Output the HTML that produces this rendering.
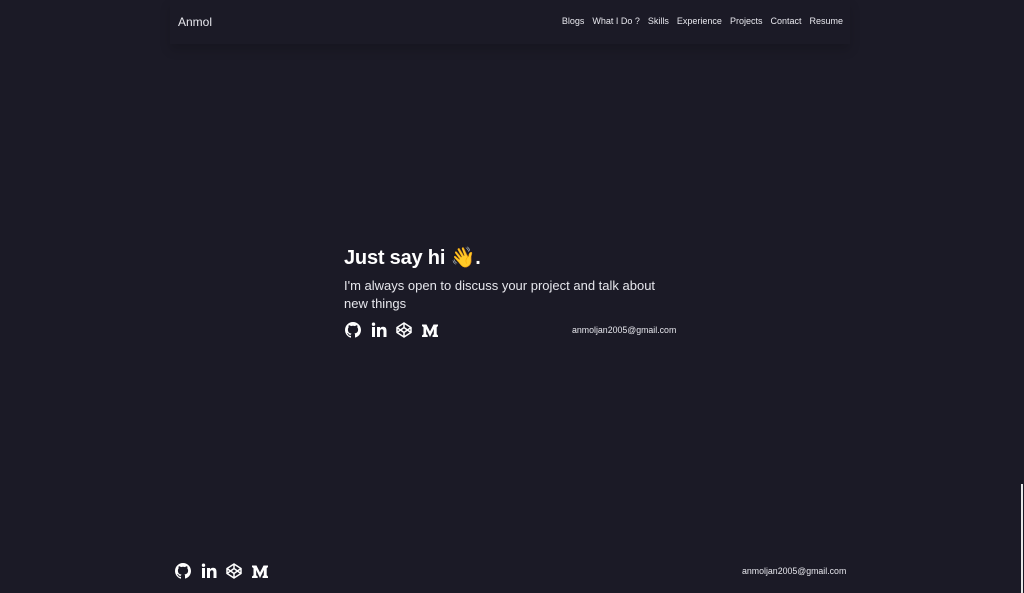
<!DOCTYPE html>
<html><head><meta charset="utf-8"><style>
*{margin:0;padding:0;box-sizing:border-box}
body{width:1024px;height:593px;background:#1b1a26;color:#fff;font-family:"Liberation Sans",sans-serif;position:relative;overflow:hidden}
.nav{position:absolute;top:0;left:170px;width:680px;height:44px;box-shadow:0 6px 10px rgba(0,0,0,.15)}
.logo{position:absolute;left:8px;top:15px;font-size:12px;color:#e8e8ee}
.links{position:absolute;right:7px;top:16px;font-size:9px;color:#e8e8ee;display:flex;gap:8px}
h1{position:absolute;left:344px;top:245px;font-size:20px;font-weight:bold;letter-spacing:-.2px}
p.sub{position:absolute;left:344px;top:277px;width:330px;font-size:13px;line-height:18px;color:#e6e6ec}
.icons{position:absolute;display:flex;gap:9.5px}
.icons svg{width:16px;height:16px;fill:#fff}
.mail{position:absolute;font-size:8.8px;color:#e6e6ec}
.sb{position:absolute;right:1px;top:484px;width:2px;height:109px;background:#e8e8e8}
</style></head><body>
<div class="nav"><div class="logo">Anmol</div>
<div class="links"><span>Blogs</span><span>What I Do ?</span><span>Skills</span><span>Experience</span><span>Projects</span><span>Contact</span><span>Resume</span></div></div>
<h1>Just say hi <span style="font-family:'Noto Color Emoji',sans-serif">👋</span>.</h1>
<p class="sub">I'm always open to discuss your project and talk about new things</p>
<div class="icons" style="left:345px;top:322px">
<svg viewBox="0 0 16 16"><path d="M8 0C3.6 0 0 3.6 0 8c0 3.5 2.3 6.5 5.5 7.6.4.1.5-.2.5-.4v-1.4c-2.2.5-2.7-1-2.7-1-.4-.9-.9-1.2-.9-1.2-.7-.5.1-.5.1-.5.8.1 1.2.8 1.2.8.7 1.3 1.9.9 2.3.7.1-.5.3-.9.5-1.1-1.8-.2-3.6-.9-3.6-4 0-.9.3-1.6.8-2.1-.1-.2-.4-1 .1-2.1 0 0 .7-.2 2.2.8.6-.2 1.3-.3 2-.3s1.4.1 2 .3c1.5-1 2.2-.8 2.2-.8.4 1.1.2 1.9.1 2.1.5.6.8 1.3.8 2.1 0 3.1-1.9 3.7-3.6 3.9.3.3.5.8.5 1.5v2.2c0 .2.1.5.6.4C13.7 14.5 16 11.5 16 8c0-4.4-3.6-8-8-8z"/></svg>
<svg viewBox="0 0 16 16"><path d="M1 5h3v10H1zM2.5 0.5a1.7 1.7 0 110 3.4 1.7 1.7 0 010-3.4zM6 5h3v1.4C9.5 5.5 10.6 4.8 12 4.8c3 0 3.5 2 3.5 4.5V15h-3V9.9c0-1.2 0-2.7-1.6-2.7S9 8.5 9 9.8V15H6z"/></svg>
<svg viewBox="0 0 16 16" fill="none" stroke="#fff" stroke-width="1.5" style="fill:none"><path d="M8 1l7 4.5v5L8 15l-7-4.5v-5zM8 1v4.5M8 10.5V15M1 5.5l7 5 7-5M1 10.5l7-5 7 5"/></svg>
<svg viewBox="0 0 16 16"><path d="M0 2.5h4.5L8 9.5l3.5-7H16v1.5l-1.3 1.2v7l1.3 1.3V15h-5.5v-1.5l1.3-1.3V7L8 15 4.2 7v5.2l1.5 1.3V15H0v-1.5l1.5-1.3V5.2L0 4z"/></svg>
</div>
<div class="mail" style="left:572px;top:325px">anmoljan2005@gmail.com</div>
<div class="icons" style="left:175px;top:563px">
<svg viewBox="0 0 16 16"><path d="M8 0C3.6 0 0 3.6 0 8c0 3.5 2.3 6.5 5.5 7.6.4.1.5-.2.5-.4v-1.4c-2.2.5-2.7-1-2.7-1-.4-.9-.9-1.2-.9-1.2-.7-.5.1-.5.1-.5.8.1 1.2.8 1.2.8.7 1.3 1.9.9 2.3.7.1-.5.3-.9.5-1.1-1.8-.2-3.6-.9-3.6-4 0-.9.3-1.6.8-2.1-.1-.2-.4-1 .1-2.1 0 0 .7-.2 2.2.8.6-.2 1.3-.3 2-.3s1.4.1 2 .3c1.5-1 2.2-.8 2.2-.8.4 1.1.2 1.9.1 2.1.5.6.8 1.3.8 2.1 0 3.1-1.9 3.7-3.6 3.9.3.3.5.8.5 1.5v2.2c0 .2.1.5.6.4C13.7 14.5 16 11.5 16 8c0-4.4-3.6-8-8-8z"/></svg>
<svg viewBox="0 0 16 16"><path d="M1 5h3v10H1zM2.5 0.5a1.7 1.7 0 110 3.4 1.7 1.7 0 010-3.4zM6 5h3v1.4C9.5 5.5 10.6 4.8 12 4.8c3 0 3.5 2 3.5 4.5V15h-3V9.9c0-1.2 0-2.7-1.6-2.7S9 8.5 9 9.8V15H6z"/></svg>
<svg viewBox="0 0 16 16" fill="none" stroke="#fff" stroke-width="1.5" style="fill:none"><path d="M8 1l7 4.5v5L8 15l-7-4.5v-5zM8 1v4.5M8 10.5V15M1 5.5l7 5 7-5M1 10.5l7-5 7 5"/></svg>
<svg viewBox="0 0 16 16"><path d="M0 2.5h4.5L8 9.5l3.5-7H16v1.5l-1.3 1.2v7l1.3 1.3V15h-5.5v-1.5l1.3-1.3V7L8 15 4.2 7v5.2l1.5 1.3V15H0v-1.5l1.5-1.3V5.2L0 4z"/></svg>
</div>
<div class="mail" style="left:742px;top:566px">anmoljan2005@gmail.com</div>
<div class="sb"></div>
</body></html>
